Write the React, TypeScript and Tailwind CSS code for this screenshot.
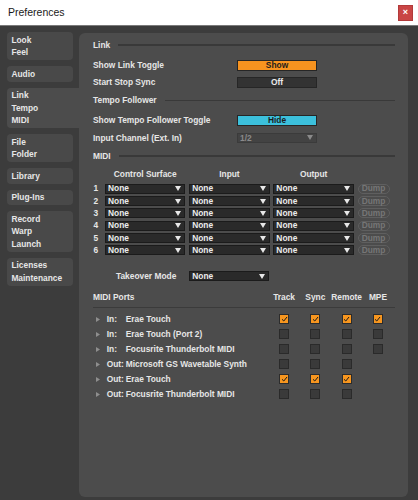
import React from "react";

const txt = "text-[8.4px] font-bold text-[#e6e6e6] whitespace-nowrap";

const sideItems = [
  { lines: ["Look", "Feel"] },
  { lines: ["Audio"] },
  { lines: ["Link", "Tempo", "MIDI"], active: true },
  { lines: ["File", "Folder"] },
  { lines: ["Library"] },
  { lines: ["Plug-Ins"] },
  { lines: ["Record", "Warp", "Launch"] },
  { lines: ["Licenses", "Maintenance"] },
];

const ports = [
  { dir: "In:", name: "Erae Touch", checks: [true, true, true, true] },
  { dir: "In:", name: "Erae Touch (Port 2)", checks: [false, false, false, false] },
  { dir: "In:", name: "Focusrite Thunderbolt MIDI", checks: [false, false, false, false] },
  { dir: "Out:", name: "Microsoft GS Wavetable Synth", checks: [false, false, false, null] },
  { dir: "Out:", name: "Erae Touch", checks: [true, true, true, null] },
  { dir: "Out:", name: "Focusrite Thunderbolt MIDI", checks: [false, false, false, null] },
];

function Arrow({ color = "#e8e8e8" }: { color?: string }) {
  return (
    <svg width="6" height="5" viewBox="0 0 6 5" className="shrink-0">
      <polygon points="0,0 6,0 3,5" fill={color} />
    </svg>
  );
}

function SectionHeader({ title, className = "" }: { title: string; className?: string }) {
  return (
    <div className={`flex items-center h-[12px] ${className}`}>
      <span className={txt}>{title}</span>
      <div className="flex-1 ml-[8px] h-[1.5px] bg-[#393939]" />
    </div>
  );
}

function Row({ label, className = "", children }: { label: string; className?: string; children: React.ReactNode }) {
  return (
    <div className={`flex items-center h-[11px] ${className}`}>
      <span className={`${txt} w-[144px]`}>{label}</span>
      {children}
    </div>
  );
}

function Toggle({ label, tone }: { label: string; tone: "orange" | "cyan" | "off" }) {
  const tones = {
    orange: "bg-[#f7931f] text-[#1c1c1c]",
    cyan: "bg-[#3cc0dc] text-[#1c1c1c]",
    off: "bg-[#333333] text-[#ececec]",
  };
  return (
    <div
      className={`w-[80px] h-[11px] border border-[#262626] flex items-center justify-center text-[8.4px] font-bold ${tones[tone]}`}
    >
      {label}
    </div>
  );
}

function Dropdown({ value, w = "w-[80.5px]", disabled = false }: { value: string; w?: string; disabled?: boolean }) {
  return (
    <div
      className={`${w} h-[10px] flex items-center justify-between pl-[2px] pr-[3px] border ${
        disabled ? "bg-[#434343] border-[#3b3b3b]" : "bg-[#2a2a2a] border-[#1b1b1b]"
      }`}
    >
      <span className={`text-[8.4px] font-bold ${disabled ? "text-[#8a8a8a]" : "text-[#ececec]"}`}>{value}</span>
      <Arrow color={disabled ? "#8a8a8a" : "#e8e8e8"} />
    </div>
  );
}

function Check({ on }: { on: boolean }) {
  return (
    <div
      className={`w-[10px] h-[10px] border flex items-center justify-center ${
        on ? "bg-[#f7961f] border-[#2c2c2c]" : "bg-[#3a3a3a] border-[#2a2a2a]"
      }`}
    >
      {on && (
        <svg width="7" height="6" viewBox="0 0 7 6">
          <polyline points="1,3.3 2.8,5 6,1" fill="none" stroke="#1a1a1a" strokeWidth="1" />
        </svg>
      )}
    </div>
  );
}

export default function App() {
  return (
    <div className="w-[418px] h-[500px] bg-[#3c3c3c] flex flex-col overflow-hidden font-['Liberation_Sans',Arial,sans-serif]">
      <div className="h-[26px] bg-white flex items-center justify-between pl-[8px] pr-[5px] border-b border-[#7a7a7a]">
        <span className="text-[10.5px] text-[#1a1a1a]">Preferences</span>
        <div className="w-[15px] h-[16px] bg-[#c94545] border border-[#b23a3a] flex items-center justify-center text-white text-[9px] font-bold leading-none">
          ×
        </div>
      </div>

      <div className="flex-1 flex">
        <div className="w-[79px] pl-[7px] pt-[6px] flex flex-col gap-[6px]">
          {sideItems.map((it) => (
            <div
              key={it.lines[0]}
              className={`py-[1.6px] pl-[4.4px] flex flex-col ${
                it.active ? "w-[72px] rounded-l-[4px] bg-[#4c4c4c]" : "w-[66px] rounded-[4px] bg-[#494949]"
              }`}
            >
              {it.lines.map((l) => (
                <span key={l} className={`${txt} leading-[12.4px]`}>
                  {l}
                </span>
              ))}
            </div>
          ))}
        </div>

        <div className="mt-[7px] w-[329px] h-[464px] rounded-[6px] bg-[#4c4c4c] pl-[14px] pr-[13px] pt-[6px] flex flex-col">
          <SectionHeader title="Link" />
          <Row label="Show Link Toggle" className="mt-[9px]">
            <Toggle label="Show" tone="orange" />
          </Row>
          <Row label="Start Stop Sync" className="mt-[5.5px]">
            <Toggle label="Off" tone="off" />
          </Row>
          <SectionHeader title="Tempo Follower" className="mt-[6.8px]" />
          <Row label="Show Tempo Follower Toggle" className="mt-[8.7px]">
            <Toggle label="Hide" tone="cyan" />
          </Row>
          <Row label="Input Channel (Ext. In)" className="mt-[6.4px]">
            <Dropdown value="1/2" w="w-[80px]" disabled />
          </Row>
          <SectionHeader title="MIDI" className="mt-[6.6px]" />

          <div className="mt-[6.5px] flex items-center h-[12px] gap-[3.7px]">
            <div className="w-[8.3px]" />
            {["Control Surface", "Input", "Output"].map((h) => (
              <span key={h} className={`${txt} w-[80.5px] text-center`}>
                {h}
              </span>
            ))}
          </div>
          <div className="mt-[3.3px] flex flex-col gap-[2.33px]">
            {[1, 2, 3, 4, 5, 6].map((n) => (
              <div key={n} className="flex items-center h-[10px] gap-[3.7px]">
                <span className={`${txt} w-[8.3px] pl-[0.5px]`}>{n}</span>
                <Dropdown value="None" />
                <Dropdown value="None" />
                <Dropdown value="None" />
                <div className="w-[32px] h-[10px] rounded-full border border-[#5f5f5f] flex items-center justify-center text-[8.4px] font-bold text-[#767676]">
                  Dump
                </div>
              </div>
            ))}
          </div>

          <div className="mt-[16px] flex items-center h-[10px]">
            <span className={`${txt} w-[96.3px] text-right pr-[13px]`}>Takeover Mode</span>
            <Dropdown value="None" w="w-[80px]" />
          </div>

          <div className="mt-[10px] flex items-center h-[12px] pr-[1.4px]">
            <span className={`${txt} flex-1`}>MIDI Ports</span>
            {["Track", "Sync", "Remote", "MPE"].map((h) => (
              <span key={h} className={`${txt} w-[31.3px] text-center`}>
                {h}
              </span>
            ))}
          </div>
          <div className="mt-[3.5px] h-[1.5px] bg-[#3b3b3b]" />
          <div className="mt-[3.5px] flex flex-col">
            {ports.map((p, i) => (
              <div key={i} className="flex items-center h-[15px] pr-[1.4px]">
                <svg width="4" height="5" viewBox="0 0 4 5" className="ml-[2.7px] mr-[7px] shrink-0">
                  <polygon points="0,0 4,2.5 0,5" fill="#8e8e8e" />
                </svg>
                <span className={`${txt} w-[19px]`}>{p.dir}</span>
                <span className={`${txt} flex-1`}>{p.name}</span>
                {p.checks.map((c, j) => (
                  <div key={j} className="w-[31.3px] flex justify-center">
                    {c !== null && <Check on={c} />}
                  </div>
                ))}
              </div>
            ))}
          </div>
        </div>
      </div>
    </div>
  );
}
